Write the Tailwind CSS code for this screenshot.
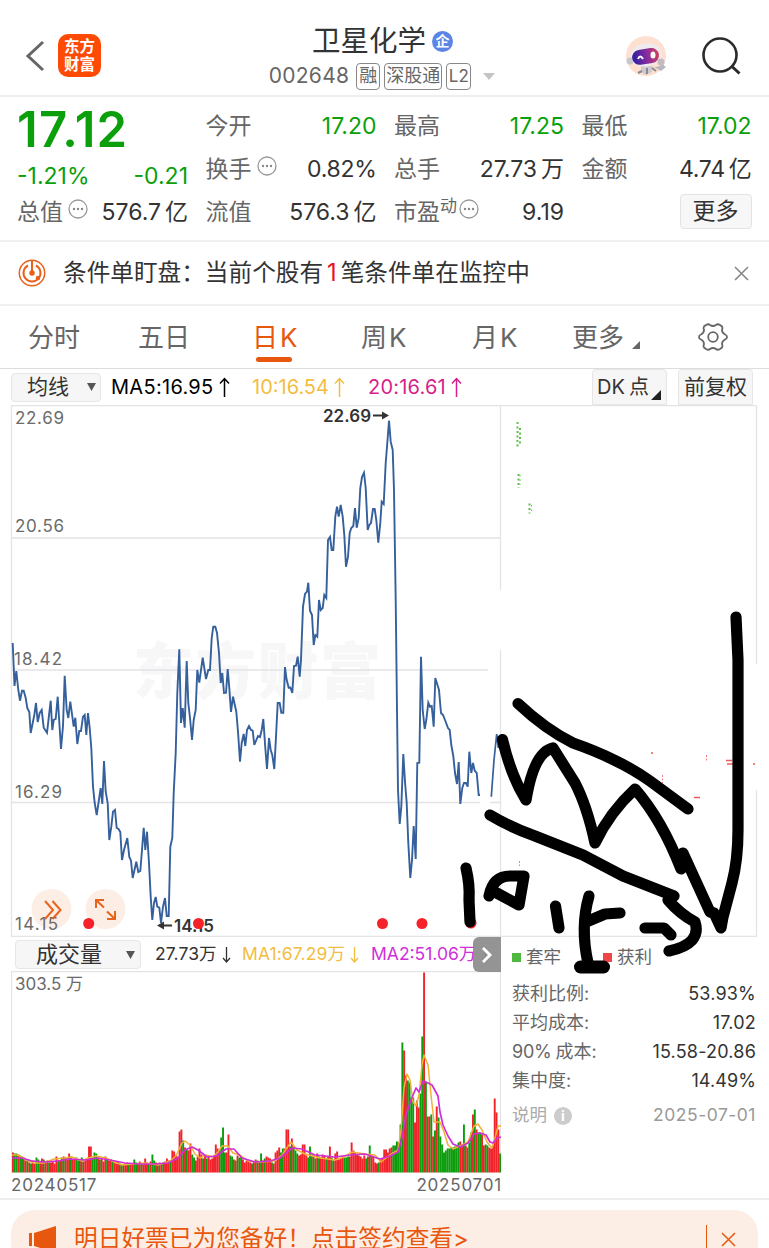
<!DOCTYPE html>
<html lang="zh-CN">
  <head>
    <meta charset="UTF-8" />
    <meta name="viewport" content="width=device-width, initial-scale=1" />
    <title>卫星化学 002648</title>
    <script src="https://cdn.jsdelivr.net/npm/@tailwindcss/browser@4"></script>
  </head>
  <body class="bg-white font-['Inter','Noto_Sans_CJK_SC',sans-serif] text-[#333]">
    <div class="relative flex h-[1248px] w-full flex-col overflow-hidden whitespace-nowrap">

      <!-- Header -->
      <header class="flex h-[97px] shrink-0 items-center justify-between border-b-2 border-[#eee] pt-4 pr-7 pl-6">
        <div class="flex w-[200px] items-center gap-3">
          <svg class="h-8 w-[22px]" viewBox="0 0 22 32" fill="none" stroke="#666" stroke-width="3"><path d="M19 2 4 16l15 14" /></svg>
          <div class="flex h-[43px] w-[43px] flex-col items-center justify-center rounded-[10px] bg-[#ff4a06] text-[15.5px] leading-[18px] font-bold text-white">
            <span>东方</span><span>财富</span>
          </div>
        </div>
        <div class="flex flex-col items-center gap-0.5">
          <h1 class="flex h-[39px] items-center gap-1.5 text-[28.5px] font-normal">卫星化学
            <span class="flex h-[21px] w-[21px] items-center justify-center rounded-full bg-[#5b86e5] text-[14px] leading-none font-bold text-white">企</span>
          </h1>
          <div class="flex items-center gap-[4px] pr-[1px] text-[19px] leading-[24px] text-[#666]">
            <span class="mr-[3px] text-[21px] tracking-[0.3px]">002648</span>
            <span class="flex h-[27px] w-6 items-center justify-center rounded-[4px] border border-[#888] text-[18px]">融</span>
            <span class="flex h-[27px] w-[58px] items-center justify-center rounded-[4px] border border-[#888] text-[18px]">深股通</span>
            <span class="flex h-[27px] w-[25px] items-center justify-center rounded-[4px] border border-[#888] text-[17px]">L2</span>
            <svg class="ml-2 h-[7px] w-3" viewBox="0 0 12 7" fill="#c4c4c4"><path d="M0 0h12L6 7z" /></svg>
          </div>
        </div>
        <div class="flex w-[200px] items-center justify-end gap-[35px]">
          <svg class="h-[42px] w-[42px]" viewBox="0 0 42 42">
            <circle cx="21" cy="21" r="20" fill="#fde0cf" />
            <path d="M16 31h12l-1 6-6 3-5-3z" fill="#cfcad0" />
            <path d="M17 36l-4 2M22 33v6M27 33l4 3" stroke="#8b8991" stroke-width="2" fill="none" />
            <path d="M29 32q6 0 8-3l4 3-5 4z" fill="#b9b6be" />
            <ellipse cx="21" cy="20" rx="16" ry="11.500" fill="#efebed" transform="rotate(-9 20 20)" />
            <circle cx="5" cy="26" r="3.500" fill="#c9c7ce" />
            <circle cx="36" cy="27" r="3.500" fill="#c0bcc4" />
            <rect x="7" y="14" width="27" height="15" rx="7.500" fill="url(#visor)" transform="rotate(-9 20 21)" />
            <path d="M13 24q2-5 5 0" stroke="#fff" stroke-width="2" fill="none" />
            <ellipse cx="28" cy="20" rx="2.500" ry="3.500" fill="#fff" />
            <defs><linearGradient id="visor"><stop stop-color="#2d1f9b" /><stop offset=".5" stop-color="#7d2aa3" /><stop offset="1" stop-color="#d33f5d" /></linearGradient></defs>
          </svg>
          <svg class="h-10 w-[39px]" viewBox="0 0 39 40" fill="none" stroke="#2b2b2b" stroke-width="2.600"><circle cx="18" cy="19" r="16.500" /><path d="M30 30.500l7.500 7" stroke-width="3" /></svg>
        </div>
      </header>

      <!-- Quote summary -->
      <section class="grid h-[145px] shrink-0 grid-cols-[171px_171px_170px_170px] justify-start gap-x-[17.500px] border-b-2 border-[#f0f0f0] pt-2 pl-[17px] text-[23px] text-[#666]">
        <div class="flex flex-col">
          <div class="h-[48px] text-[49px] leading-[50px] font-semibold tracking-[1.2px] text-[#0b9f0b]">17.12</div>
          <div class="flex h-[38px] items-end justify-between leading-[30px] text-[#0b9f0b]"><span>-1.21%</span><span>-0.21</span></div>
          <div class="flex h-[43px] items-center">
            <span>总值</span>
            <svg class="mb-2 ml-[5px] h-5 w-5" viewBox="0 0 20 20" fill="#888"><circle cx="10" cy="10" r="9" fill="none" stroke="#999" stroke-width="1.300" /><circle cx="6" cy="10" r="1.200" /><circle cx="10" cy="10" r="1.200" /><circle cx="14" cy="10" r="1.200" /></svg>
            <span class="ml-auto text-[#333]">576.7<span class="ml-1">亿</span></span>
          </div>
        </div>
        <div class="flex flex-col">
          <div class="flex h-[43px] items-center justify-between"><span>今开</span><span class="text-[#0b9f0b]">17.20</span></div>
          <div class="flex h-[43px] items-center">
            <span>换手</span>
            <svg class="mb-2 ml-[5px] h-5 w-5" viewBox="0 0 20 20" fill="#888"><circle cx="10" cy="10" r="9" fill="none" stroke="#999" stroke-width="1.300" /><circle cx="6" cy="10" r="1.200" /><circle cx="10" cy="10" r="1.200" /><circle cx="14" cy="10" r="1.200" /></svg>
            <span class="ml-auto tracking-[-0.3px] text-[#333]">0.82%</span>
          </div>
          <div class="flex h-[43px] items-center justify-between"><span>流值</span><span class="text-[#333]">576.3<span class="ml-1">亿</span></span></div>
        </div>
        <div class="flex flex-col">
          <div class="flex h-[43px] items-center justify-between"><span>最高</span><span class="text-[#0b9f0b]">17.25</span></div>
          <div class="flex h-[43px] items-center justify-between"><span>总手</span><span class="text-[#333]">27.73<span class="ml-1">万</span></span></div>
          <div class="flex h-[43px] items-center">
            <span>市盈</span><span class="mb-3 text-[17px]">动</span>
            <svg class="mb-2 ml-0.5 h-5 w-5" viewBox="0 0 20 20" fill="#888"><circle cx="10" cy="10" r="9" fill="none" stroke="#999" stroke-width="1.300" /><circle cx="6" cy="10" r="1.200" /><circle cx="10" cy="10" r="1.200" /><circle cx="14" cy="10" r="1.200" /></svg>
            <span class="ml-auto text-[#333]">9.19</span>
          </div>
        </div>
        <div class="flex flex-col">
          <div class="flex h-[43px] items-center justify-between"><span>最低</span><span class="text-[#0b9f0b]">17.02</span></div>
          <div class="flex h-[43px] items-center justify-between"><span>金额</span><span class="tracking-[-0.3px] text-[#333]">4.74<span class="ml-1">亿</span></span></div>
          <div class="flex h-[43px] items-center justify-end"><button class="mb-[3px] h-[35px] w-[72px] rounded-[4px] border border-[#e3e3e3] bg-[#f7f7f7] leading-[30px] text-[#333]">更多</button></div>
        </div>
      </section>

      <!-- Condition order notice -->
      <section class="flex h-16 shrink-0 items-center border-b-2 border-[#f0f0f0] pr-5 pl-[18px]">
        <svg class="h-7 w-7" viewBox="0 0 28 28" fill="none" stroke="#e8601c" stroke-width="1.500"><circle cx="14" cy="14" r="12.700" /><path d="M10 6.500a8.500 8.500 0 1 0 8 0" stroke-width="2" /><path d="M14 2v12" stroke-width="2" /><circle cx="14" cy="14" r="2" fill="#e8601c" /><circle cx="20" cy="19" r="1.500" fill="#e8601c" /></svg>
        <p class="ml-[17px] text-[23.650px]">条件单盯盘：当前个股有<span class="mx-1 text-[#e8141e]">1</span>笔条件单在监控中</p>
        <svg class="ml-auto h-[15px] w-[15px]" viewBox="0 0 15 15" stroke="#888" stroke-width="1.600"><path d="M1 1l13 13M14 1 1 14" /></svg>
      </section>

      <!-- Period tabs -->
      <nav class="flex h-[63px] shrink-0 items-center border-b border-[#ddd] pl-7 text-[26px] text-[#666]">
        <span class="w-[110px]">分时</span>
        <span class="w-[114px]">五日</span>
        <span class="relative w-[109px] text-[#e8570e]">日<span class="ml-0.5">K</span><i class="absolute -bottom-[5px] left-1 h-[5px] w-[36px] rounded-full bg-[#e8570e]"></i></span>
        <span class="w-[111px]">周<span class="ml-0.5">K</span></span>
        <span class="w-[100px]">月<span class="ml-0.5">K</span></span>
        <span class="flex w-[126px] items-end">更多<svg class="mb-2 ml-2 h-2 w-2" viewBox="0 0 8 8" fill="#666"><path d="M8 0v8H0z" /></svg></span>
        <svg class="h-[30px] w-[30px]" viewBox="0 0 30 30" fill="none" stroke="#666" stroke-width="1.800"><path d="M12 3q3 2 6 0 1.500-1.500 4 0l2 1.500q1 1.500 0 3.500 0 3 3 4.500 2 .5 2 2.500t-2 2.500q-3 1.500-3 4.500 1 2 0 3.500l-2 1.500q-2.500 1.500-4 0-3-2-6 0-1.500 1.500-4 0l-2-1.500q-1-1.500 0-3.500 0-3-3-4.500-2-.5-2-2.500t2-2.500q3-1.500 3-4.500-1-2 0-3.500L8 3q2.500-1.500 4 0z" /><circle cx="15" cy="15" r="4.800" /></svg>
      </nav>

      <!-- Moving average bar -->
      <div class="flex h-9 shrink-0 items-center pr-4 pl-[11px] text-[20px]">
        <button class="flex h-[29px] w-[90px] items-center justify-between rounded-[4px] border border-[#e6e6e6] bg-[#f6f6f6] pr-1 pl-[15px] text-[21px]">均线<svg class="h-2 w-[9px]" viewBox="0 0 9 8" fill="#555"><path d="M0 0h9L4.500 8z" /></svg></button>
        <span class="ml-[10px] flex w-[141px] items-center gap-[5px] tracking-[0.3px] text-black">MA5:16.95<svg class="h-[21px] w-[11px]" viewBox="0 0 11 21" fill="none" stroke="currentColor" stroke-width="1.500"><path d="M5.500 20V1.500M1 6.500l4.500-5 4.500 5" /></svg></span>
        <span class="flex w-[116px] items-center gap-[5px] text-[#f3bd42]">10:16.54<svg class="h-[21px] w-[11px]" viewBox="0 0 11 21" fill="none" stroke="currentColor" stroke-width="1.500"><path d="M5.500 20V1.500M1 6.500l4.500-5 4.500 5" /></svg></span>
        <span class="flex items-center gap-[5px] tracking-[0.2px] text-[#d61f8a]">20:16.61<svg class="h-[21px] w-[11px]" viewBox="0 0 11 21" fill="none" stroke="currentColor" stroke-width="1.500"><path d="M5.500 20V1.500M1 6.500l4.500-5 4.500 5" /></svg></span>
        <button class="ml-auto flex h-9 w-[75px] items-center rounded-t-[4px] border border-[#e6e6e6] bg-[#f6f6f6] pl-1">DK<span class="ml-1">点</span><svg class="mt-4 ml-0.5 h-[10px] w-[10px] shrink-0" viewBox="0 0 10 10" fill="#222"><path d="M10 0v10H0z" /></svg></button>
        <button class="ml-[11px] h-9 w-[75px] rounded-t-[4px] border border-[#e6e6e6] bg-[#f6f6f6] text-[21px]">前复权</button>
      </div>

      <!-- Price chart -->
      <svg class="h-[532px] w-full shrink-0" viewBox="0 405 769 532">
        <text x="133" y="694" textLength="248" font-size="61" font-weight="900" fill="#f7f7f8">东方财富</text>
        <g stroke="#e4e4e7" stroke-width="1.300" fill="none">
          <path d="M11.500 937V405.500H756.500M11.500 936.500H756.500M12 538H500M12 670H488M12 802.500H480M490 802.500H500" />
          <path d="M500.500 405V590M500.500 650V937M756.500 405V664M756.500 790V937" />
        </g>
        <g font-size="17" fill="#6b6b6b">
          <text x="15" y="424" textLength="49">22.69</text>
          <text x="15" y="532" textLength="49">20.56</text>
          <text x="14" y="664.500" textLength="48">18.42</text>
          <text x="15" y="797.500" textLength="47">16.29</text>
        </g>
        <polyline fill="none" stroke="#35609c" stroke-width="1.900" points="12.7,643 14.5,686 16.3,671 18.3,690 20,700.7 22,690.7 23.7,690.7 25.7,698 27.3,708 29.3,712 30.7,733 34.3,715 36,703 37.7,722 39.7,713 41.7,710 43.7,727.7 47,732.7 50.7,700.7 52.3,730 53.7,720 55.7,719 57.7,696.7 61,749 63,726 64.7,675.7 66.7,710 68.3,718 70.3,701.7 73.7,726.7 75.3,717.7 77.3,744 79.3,731 81,731 83,716.7 84.7,715 86.3,735 88,713 89.7,728 91.3,748 93,786.7 94.7,803 96.7,815 100.7,788 102.3,804 104,761 105.7,791.7 107.7,803 109.3,840 111.3,826.7 113,811.7 115,810 116.7,828 118.5,829 120.3,832 122,860 124,850 127.3,838 129.3,857 131,860.7 132.7,878 136.3,861.7 138.3,872 140.3,871 142,850 143.7,827.7 145.3,850 147,831.7 149,863 150.7,896.7 152.3,920 154,903 155.7,897 157.3,906.7 159.3,907.7 161,923 163,906.7 165,898 166.7,916 168.7,916 170.3,846.7 172.3,838 173.7,793 175.7,753 177.3,693 179.3,649.3 181,723 182.7,708 184.7,727.7 186.7,661 188.3,703 190,718 192,740 193.7,720 195.7,710 197.3,670 199.3,682.7 202.7,657.7 206,679 208.3,670 210,670 211.7,638 213.3,626.7 215.3,626.7 217,633 219,653 220.7,683 222.3,673 224,693 226,692.7 227.7,669 229.3,688 231,712 233,696.7 236.3,711.7 238,731.7 240,761.7 241.7,743 243.7,734 245.3,746 247,730 249,726 251,730 252.7,730.7 254.3,745 258,736 260,737 261.7,730 263.3,719 265.3,748 267,769 269,738 270.7,750 272.3,755 274.3,769 276,736.7 277.7,703 279.7,703 281.3,712.7 283.3,712.7 285,667 286.7,680 288.7,687.7 290.3,687.5 292.3,693 294,666 296,665.7 297.7,656.7 299.7,676.7 301,660 303,606.7 305,594 307,591.7 308.3,582.7 310,610.7 312,615 313.7,645 315.3,635 317.3,636.7 319,600 320.7,610 322.7,608 324.3,595 326.3,598 328,540 330,537 331.7,550 333.3,550 335.3,516.7 337,506.7 338.7,516.7 340.7,505 342.7,516.7 344.3,535 346,566.7 348,556.7 349.7,533 351.3,528 353.3,526 355,508 356.7,527.7 358.7,518 360.3,488 362,477 364,472.7 365.7,488 367.7,530 369.3,525 371,523 373,509 374.7,509 376.3,520 378.3,542.7 380.3,523 381.7,501.7 383.7,504 385.7,463 387.3,443 389,420.7 390.7,441.7 392.7,450 394,490 395.7,600 397,710 398,790 399.7,824 401.3,806.7 403.3,754 405,781.7 406.7,803 408.3,843 410.3,878 412,860 413.7,826 415.7,859 417.3,763 419.3,762.7 421,656.7 422.7,710 424.7,729 426.3,720 428.3,702.7 430,706.7 431.7,706 433.7,726.7 435.3,678 439,690 441,713 443,715 445,720 448,728 449.7,730 451.3,745 453.3,756 455,773 457,784 458.7,762 460.3,804 462.3,788 464,783 466,783 467.7,786.7 469.3,751.7 471.3,773 473,763 474.7,770.7 476.7,773 478.7,795 480,795" />
        <polyline fill="none" stroke="#35609c" stroke-width="1.700" points="491.3,796.7 494,760 496.7,734 498.3,748 500,742" />
        <g font-size="17" font-weight="600" fill="#333">
          <text x="323" y="422" textLength="48">22.69</text>
          <text x="174" y="931.500" textLength="40">14.15</text>
        </g>
        <path d="M373 415.500h11M161 925.500h11" stroke="#333" stroke-width="1.800" />
        <path d="M382 411.500l7 4-7 4zM164 921.500l-7 4 7 4z" fill="#333" />
        <circle cx="51.500" cy="909" r="20" fill="#fdeee5" />
        <circle cx="105.500" cy="909" r="20" fill="#fdeee5" />
        <text x="15" y="930" textLength="43" font-size="17" fill="#6b6b6b">14.15</text>
        <g fill="none" stroke="#e8641c" stroke-width="2">
          <path d="M45 901l8 9-8 9M52.500 901l8 9-8 9" />
          <path d="M104 907.500l-7.500-7M96 908v-8h8M107 911.500l7.500 7M115 911v8h-8" />
        </g>
        <g fill="#f5222a">
          <circle cx="88.700" cy="923.500" r="5.500" /><circle cx="198.500" cy="923.500" r="5.500" /><circle cx="382.500" cy="923.500" r="5.500" /><circle cx="422" cy="923.500" r="5.500" /><circle cx="471" cy="923" r="5.500" />
        </g>
        <!-- Chip distribution -->
        <g stroke="#5fbf4a" stroke-width="2" stroke-dasharray="2 2.500" fill="none">
          <path d="M517.500 422v27M520 428v17M518.500 474v14M529.500 503.500v10" />
        </g>
        <path d="M520 475v10M531.500 505v6" stroke="#5fbf4a" stroke-dasharray="1.500 3" />
        <g stroke="#ee5a5a" stroke-width="1.300">
          <path d="M726 760.500h6M727 764h6M694 797.500h6M753 764h2M651 753h2" />
          <path d="M706.500 755v6M662.500 775v8M519.500 861v5" stroke-width=".8" stroke-dasharray="2 1.500" />
        </g>
      </svg>

      <!-- Volume and chip cost -->
      <div class="flex h-[263px] shrink-0 border-b-2 border-[#eee] pl-[11px]">
        <div class="w-[490px]">
          <div class="relative flex h-[34px] items-center pt-px text-[17.500px]">
            <button class="ml-1 flex h-[29px] w-[126px] items-center justify-between rounded-[4px] border border-[#e6e6e6] bg-[#f6f6f6] pr-[5px] pl-5 text-[22px]">成交量<svg class="h-2 w-[9px]" viewBox="0 0 9 8" fill="#555"><path d="M0 0h9L4.500 8z" /></svg></button>
            <span class="ml-[14px] flex w-[87px] items-center gap-[5px] tracking-[0.1px]">27.73万<svg class="h-4 w-[9px]" viewBox="0 0 9 16" fill="none" stroke="currentColor" stroke-width="1.300"><path d="M4.500 0v15M1 11l3.500 4L8 11" /></svg></span>
            <span class="flex w-[129px] items-center gap-[5px] tracking-[0.1px] text-[#f3bd42]">MA1:67.29万<svg class="h-4 w-[9px]" viewBox="0 0 9 16" fill="none" stroke="currentColor" stroke-width="1.300"><path d="M4.500 0v15M1 11l3.500 4L8 11" /></svg></span>
            <span class="flex items-center gap-[5px] text-[#cf30d8]">MA2:51.06万<svg class="h-4 w-[9px]" viewBox="0 0 9 16" fill="none" stroke="currentColor" stroke-width="1.300"><path d="M4.500 0v15M1 11l3.500 4L8 11" /></svg></span>
            <div class="absolute top-0 right-0 flex h-[35px] w-7 items-center justify-center rounded-l-[6px] bg-[#888]/90">
              <svg class="h-4 w-[10px]" viewBox="0 0 10 16" fill="none" stroke="#fff" stroke-width="3"><path d="M1 1l7 7-7 7" /></svg>
            </div>
          </div>
          <svg class="h-[202px] w-full" viewBox="11 971 490 202">
            <path d="M11.500 1173V971.500H500.500V1173" fill="none" stroke="#e4e4e7" stroke-width="1.300" />
            <text x="15" y="989.500" textLength="68" font-size="17" fill="#6b6b6b">303.5 万</text>
            <g id="volume"></g>
            <path fill="none" stroke="#f2b035" stroke-width="1.500" stroke-linejoin="round" d="M12 1155 18 1155 26 1160 34 1163 44 1163 54 1159 64 1158 72 1157 82 1161 88 1158 96 1156 106 1158 112 1161 122 1165 132 1164 145 1163 158 1165 170 1161 176 1156 182 1143 185 1141 190 1145 195 1154 200 1158 206 1155 213 1157 218 1152 222 1146 228 1146 233 1153 240 1155 248 1161 260 1162 275 1161 282 1155 291 1142 297 1150 305 1154 320 1158 335 1160 344 1157 352 1152 365 1154 375 1155 381 1162 390 1155 398 1150 401 1130 404 1088 407 1074 410 1080 413 1102 416 1106 419 1095 422 1065 424 1055 428 1065 431 1095 434 1122 440 1122 444 1132 448 1145 453 1149 462 1145 468 1142 474 1126 478 1124 482 1130 487 1142 492 1148 495 1138 498 1126 501 1126" />
            <path fill="none" stroke="#d02fd6" stroke-width="1.700" stroke-linejoin="round" d="M12 1158 22 1158 32 1161 45 1162 58 1161 70 1159 85 1160 98 1158 110 1160 125 1163 140 1164 155 1164 168 1163 178 1158 185 1150 192 1147 198 1150 207 1157 216 1156 226 1149 234 1149 242 1158 255 1162 270 1161 280 1158 292 1148 302 1149 315 1155 335 1157 350 1155 365 1154 380 1159 390 1156 398 1152 402 1138 406 1115 411 1100 416 1088 419 1092 423 1081 428 1083 432 1085 438 1096 440 1112 443 1125 448 1136 453 1144 460 1147 468 1143 474 1134 480 1133 486 1135 490 1142 493 1143 497 1138 501 1137" />
          </svg>
          <div class="flex justify-between pt-px text-[17px] leading-[22px] text-[#666]"><span class="tracking-[0.800px]">20240517</span><span class="-mr-px tracking-[0.800px]">20250701</span></div>
        </div>

        <div class="ml-[11px] w-[244px] text-[18px] text-[#666]">
          <div class="flex h-[41px] items-center pb-px">
            <i class="mr-[5px] h-[9px] w-[9px] bg-[#4fb83f]"></i><span class="w-[76px] text-[17.500px]">套牢</span>
            <i class="mr-[5px] ml-px h-[9px] w-[9px] bg-[#f04646]"></i><span class="text-[17.500px]">获利</span>
          </div>
          <div class="mt-px flex h-[29px] items-center justify-between"><span>获利比例:</span><span class="tracking-[0.200px] text-[#333]">53.93%</span></div>
          <div class="flex h-[29px] items-center justify-between"><span>平均成本:</span><span class="tracking-[0.200px] text-[#333]">17.02</span></div>
          <div class="flex h-[29px] items-center justify-between"><span><span class="mr-1 tracking-[-0.200px]">90%</span>成本:</span><span class="tracking-[0.200px] text-[#333]">15.58-20.86</span></div>
          <div class="flex h-[29px] items-center justify-between"><span>集中度:</span><span class="tracking-[0.100px] text-[#333]">14.49%</span></div>
          <div class="mt-[6px] flex h-[29px] items-center text-[#aaa]">
            <span class="text-[17.500px]">说明</span>
            <span class="ml-[7px] flex h-[18px] w-[18px] items-center justify-center rounded-full bg-[#ccc] text-[14px] font-bold text-white">i</span>
            <span class="ml-auto text-[17.500px] tracking-[0.500px] text-[#999]">2025-07-01</span>
          </div>
        </div>
      </div>

      <!-- Promo banner -->
      <div class="mx-[11px] mt-[10px] flex h-[58px] shrink-0 items-center rounded-[24px] bg-[#fdeee5] pr-[22px] pl-[18px] text-[#e8570e]">
        <svg class="h-7 w-7" viewBox="0 0 28 28" fill="#e8570e"><path d="M0 8h3v13H0zM5 8l22-7v27L5 21z" /></svg>
        <span class="ml-[17px] text-[23.700px]">明日好票已为您备好！点击签约查看&gt;</span>
        <i class="ml-auto h-7 w-px bg-[#e8570e]"></i>
        <svg class="ml-[14px] h-[15px] w-[15px]" viewBox="0 0 15 15" stroke="#e8570e" stroke-width="1.500"><path d="M1 1l13 13M14 1 1 14" /></svg>
      </div>

      <!-- Hand-drawn notes over the chart -->
      <svg class="pointer-events-none absolute top-0 left-0 h-[1248px] w-[769px]" viewBox="0 0 769 1248" fill="none" stroke="#000" stroke-width="11.200" stroke-linecap="round" stroke-linejoin="round">
        <path d="M518 703.500Q545 729 573 743 596 751 614 760 633 769 650 781L688 809" />
        <path d="M502.500 739.500Q511 776 526 800 534 752 553 748L575 783Q587 806 595 843 610 812 635 789 662 820 681 869L683 853 710 912 714 913 721 928 723 917 732 883Q738 860 738 830V660L736 617" />
        <path d="M490 815Q510 827 535 836L583 855 623 876 674 896 668 900Q680 914 695 922 702 944 669 951" />
        <path d="M466 868Q470 885 469 900L470 922" />
        <path d="M489 896Q493 876 510 876H524L519 905 493 891" />
        <path d="M555.500 906 559 928M589 896Q580 927 588 963M586 922 605 914 620 913" />
        <path d="M580.500 967H603.500" stroke-width="13" />
        <path d="M645 928H664L671 935" />
      </svg>
    </div>

    <script>
      // Daily volume bar heights: positive = up day, negative = down day
      const bars = [
        20, -19, -19, 18, -17, -16, 15, 12, -13, 10, -9, 12, 9, -15, -13, 11, 14, -13, 11, 12,
        -10, 10, 11, 9, 16, -12, 12, -15, 16, -15, 14, 19, -16, 13, 14, -15, -12, 13, -15, 11,
        12, 14, 26, 26, -15, -20, -19, 15, -13, 14, 11, 16, -13, 12, 13, -11, 10, 9, 11, -9,
        8, -8, 9, 10, -9, 8, 9, -13, -10, 9, 11, -9, 8, 14, 10, -9, 11, -18, -12, 10,
        -9, 10, 9, -10, 11, 14, 12, -11, 22, 21, 17, 16, 41, 43, -32, 25, -23, 22, 29, -18,
        -15, 12, 16, 24, 18, -14, 17, -14, 16, 13, 14, 17, 28, 24, 22, -35, -45, -20, 20, 38,
        -17, -16, 13, -12, 17, -15, -16, 13, 10, 12, 11, 10, -9, 11, 13, -12, 10, -19, 12, -14,
        16, 15, 14, -10, 9, 20, 22, 25, -20, -24, 24, 43, 43, -26, 34, -26, -22, -19, 17, 18,
        28, 28, 17, -15, -26, -18, 17, -14, 19, -16, 15, 18, 17, -14, 16, 26, -15, -12, 19, 21,
        13, 14, 16, -15, -15, -16, 16, 30, 22, 20, 18, 17, 16, 14, 17, -14, 16, -27, 17, 16,
        10, 9, -10, 13, 14, 23, 23, 20, 24, 25, -27, -27, -31, -30, -48, -130, 122, 97, -92, -90,
        -75, -75, 50, 72, 65, -79, -136, 200, -91, 56, 56, -58, 36, -42, 66, -55, -36, -28, -20, -22,
        -24, -24, -25, -25, -26, -26, -30, 31, 26, -48, 27, 25, -30, -40, 58, -63, 43, -40, -40, 38,
        27, -28, -27, 25, 24, 27, 74, 60, 43, -19,
      ];
      const step = 489 / bars.length;
      document.getElementById('volume').innerHTML = bars
        .map((v, i) => {
          const h = Math.abs(v);
          return `<rect x="${12 + i * step}" y="${1172.5 - h}" width="${step + 0.1}" height="${h}" fill="${v > 0 ? '#ef2329' : '#0c9c0c'}" />`;
        })
        .join('');
    </script>
  </body>
</html>
